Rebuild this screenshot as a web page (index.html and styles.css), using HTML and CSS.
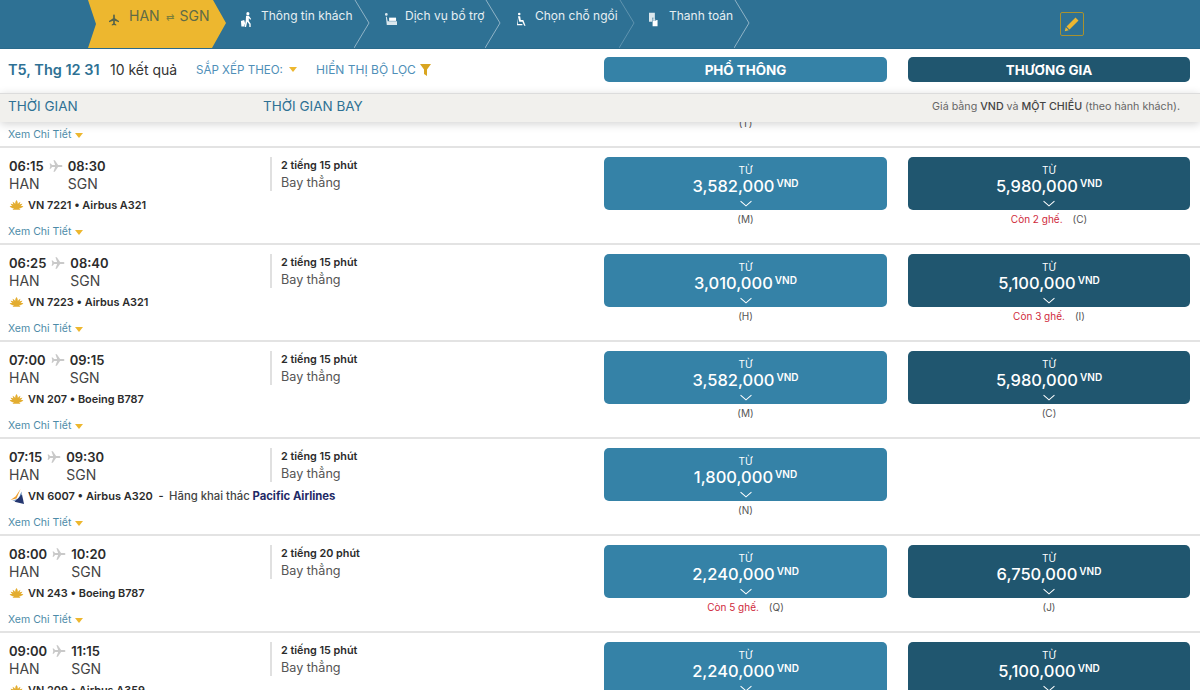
FILE: index.html
```html
<!DOCTYPE html>
<html lang="vi">
<head>
<meta charset="utf-8">
<title>Chọn chuyến bay</title>
<link rel="stylesheet" href="styles.css">
</head>
<body>
<svg class="defs" width="0" height="0">
  <defs>
    <symbol id="plane" viewBox="0 0 24 24"><path d="M23 12c0-1-1-1.700-2.500-1.700h-5L10 2H7.600l2.900 8.300H5.200L3 7.500H1l1.200 4.500L1 16.500h2l2.200-2.800h5.300L7.600 22H10l5.500-8.300h5C22 13.700 23 13 23 12z"/></symbol>
    <symbol id="lotus" viewBox="0 0 24 16"><path d="M12 0c1.600 2 2.300 4 2 6.500 1-1.700 2.400-3 4.200-3.700-.2 1.700-.6 3-1.300 4.400 1.500-.9 3-1.300 4.600-1.200-.7 1.500-1.600 2.700-2.800 3.600 1.400-.2 2.800 0 4.300.7-2.500 2.400-5 3-7.400 2.700 1.300.5 2.200 1.300 2.600 2.500H5.800c.4-1.200 1.300-2 2.600-2.500-2.400.3-4.900-.3-7.400-2.700 1.500-.7 2.900-.9 4.300-.7C4.100 8.700 3.200 7.500 2.500 6c1.600-.1 3.100.3 4.600 1.200C6.400 5.800 6 4.500 5.800 2.800 7.600 3.500 9 4.800 10 6.500 9.700 4 10.400 2 12 0z"/></symbol>
    <symbol id="chev" viewBox="0 0 18 8"><path d="M2 1l7 6 7-6" fill="none" stroke="#fff" stroke-width="1.300"/></symbol>
    <symbol id="tri" viewBox="0 0 8 5"><path d="M0 0h8L4 5z"/></symbol>
  </defs>
</svg>

<div class="page">
  <nav class="steps">
    <div class="step-current">
      <svg class="ic-route" viewBox="0 0 24 24"><use href="#plane" transform="rotate(-90 12 12)"/></svg>
      <span class="route">HAN <span class="swap">⇄</span> SGN</span>
    </div>
    <div class="step step-a">
      <svg class="step-ic" viewBox="0 0 14 16"><path d="M8.500 0a1.700 1.700 0 1 1 0 3.400 1.700 1.700 0 0 1 0-3.400zM6.500 4h3l2.500 3.500-1 .7L9.500 6.500v3.200l2 2.800v3.500H10v-3L7.800 10.500 6.500 16H5l1.200-7zM1 9.500l3.500-1 1 3.500-1 3.500H1.500z" fill="#fff"/></svg>
      <span class="step-text">Thông tin khách</span>
      <svg class="sep" viewBox="0 0 16 48"><path d="M1 0l14 23L0 48" fill="none" stroke="#8fb3c6"/></svg>
    </div>
    <div class="step step-b">
      <svg class="step-ic" viewBox="0 0 14 14"><path d="M1 1.500a1.500 1.500 0 1 1 3 0 1.500 1.500 0 0 1-3 0zM2 4l1 0 1 5h10v4H3z" fill="#dbe8ee"/><path d="M5.500 5h7.500v3.500H5.500z" fill="#fff"/></svg>
      <span class="step-text">Dịch vụ bổ trợ</span>
      <svg class="sep" viewBox="0 0 16 48"><path d="M1 0l14 23L0 48" fill="none" stroke="#8fb3c6"/></svg>
    </div>
    <div class="step step-c">
      <svg class="step-ic step-ic-sm" viewBox="0 0 10 15"><path d="M2.500 0a1.400 1.400 0 1 1 0 2.800 1.400 1.400 0 0 1 0-2.800zM1 4h2.500l.7 4H7l2.500 6.500H8L6 10H2.500zM.3 6l.7 6.500H6v1.500H0z" fill="#fff"/></svg>
      <span class="step-text">Chọn chỗ ngồi</span>
      <svg class="sep sep-faint" viewBox="0 0 16 48"><path d="M1 0l14 23L0 48" fill="none" stroke="#5e93ae"/></svg>
    </div>
    <div class="step step-d">
      <svg class="step-ic step-ic-sm" viewBox="0 0 10 15"><path d="M0 0h6.500v8H5V5.500H3.500V10H0z" fill="#dbe8ee"/><path d="M4 6h1v3h1V7.500h1V9h1V8h1.500v7H4z" fill="#fff"/></svg>
      <span class="step-text">Thanh toán</span>
      <svg class="sep" viewBox="0 0 16 48"><path d="M1 0l14 23L0 48" fill="none" stroke="#8fb3c6"/></svg>
    </div>
    <button class="edit" aria-label="Sửa">
      <svg viewBox="0 0 16 16" width="16" height="16"><path d="M11.500 1.500l3 3-9 9-3-3zM1.800 11.300l2.900 2.900-3.900 1z" fill="#edb72f"/></svg>
    </button>
  </nav>

  <div class="toolbar">
    <div class="date">T5, Thg 12 31</div>
    <div class="count">10 kết quả</div>
    <div class="tool tool-sort">SẮP XẾP THEO:<svg class="tri-sort"><use href="#tri"/></svg></div>
    <div class="tool tool-filter">HIỂN THỊ BỘ LỌC<svg class="funnel" viewBox="0 0 11 12"><path d="M0 0h11L7 5.500V12L4 10V5.500z"/></svg></div>
    <div class="cabin eco">PHỔ THÔNG</div>
    <div class="cabin biz">THƯƠNG GIA</div>
  </div>

  <div class="thead">
    <div class="th-time">THỜI GIAN</div>
    <div class="th-dur">THỜI GIAN BAY</div>
    <div class="th-note">Giá bằng <b>VND</b> và <b>MỘT CHIỀU</b> (theo hành khách).</div>
  </div>

  <div class="list">
    <div class="row row-partial">
      <div class="partial-left"><a class="more">Xem Chi Tiết <svg class="tri"><use href="#tri"/></svg></a></div>
      <div class="partial-note">(T)</div>
    </div>

    <div class="row">
      <div class="c-flight">
        <div class="times"><b>06:15</b><svg class="pl"><use href="#plane"/></svg><b>08:30</b><span>HAN</span><i></i><span>SGN</span></div>
        <div class="carrier"><svg class="lotus"><use href="#lotus"/></svg>VN 7221 • Airbus A321</div>
        <a class="more">Xem Chi Tiết <svg class="tri"><use href="#tri"/></svg></a>
      </div>
      <div class="c-dur"><b>2 tiếng 15 phút</b><span>Bay thẳng</span></div>
      <div class="c-fare"><div class="fare eco"><small>TỪ</small><div class="price">3,582,000<sup>VND</sup></div><svg class="chev"><use href="#chev"/></svg></div><div class="note">(M)</div></div>
      <div class="c-fare"><div class="fare biz"><small>TỪ</small><div class="price">5,980,000<sup>VND</sup></div><svg class="chev"><use href="#chev"/></svg></div><div class="note"><em>Còn 2 ghế.</em>(C)</div></div>
    </div>

    <div class="row">
      <div class="c-flight">
        <div class="times"><b>06:25</b><svg class="pl"><use href="#plane"/></svg><b>08:40</b><span>HAN</span><i></i><span>SGN</span></div>
        <div class="carrier"><svg class="lotus"><use href="#lotus"/></svg>VN 7223 • Airbus A321</div>
        <a class="more">Xem Chi Tiết <svg class="tri"><use href="#tri"/></svg></a>
      </div>
      <div class="c-dur"><b>2 tiếng 15 phút</b><span>Bay thẳng</span></div>
      <div class="c-fare"><div class="fare eco"><small>TỪ</small><div class="price">3,010,000<sup>VND</sup></div><svg class="chev"><use href="#chev"/></svg></div><div class="note">(H)</div></div>
      <div class="c-fare"><div class="fare biz"><small>TỪ</small><div class="price">5,100,000<sup>VND</sup></div><svg class="chev"><use href="#chev"/></svg></div><div class="note"><em>Còn 3 ghế.</em>(I)</div></div>
    </div>

    <div class="row">
      <div class="c-flight">
        <div class="times"><b>07:00</b><svg class="pl"><use href="#plane"/></svg><b>09:15</b><span>HAN</span><i></i><span>SGN</span></div>
        <div class="carrier"><svg class="lotus"><use href="#lotus"/></svg>VN 207 • Boeing B787</div>
        <a class="more">Xem Chi Tiết <svg class="tri"><use href="#tri"/></svg></a>
      </div>
      <div class="c-dur"><b>2 tiếng 15 phút</b><span>Bay thẳng</span></div>
      <div class="c-fare"><div class="fare eco"><small>TỪ</small><div class="price">3,582,000<sup>VND</sup></div><svg class="chev"><use href="#chev"/></svg></div><div class="note">(M)</div></div>
      <div class="c-fare"><div class="fare biz"><small>TỪ</small><div class="price">5,980,000<sup>VND</sup></div><svg class="chev"><use href="#chev"/></svg></div><div class="note">(C)</div></div>
    </div>

    <div class="row">
      <div class="c-flight">
        <div class="times"><b>07:15</b><svg class="pl"><use href="#plane"/></svg><b>09:30</b><span>HAN</span><i></i><span>SGN</span></div>
        <div class="carrier carrier-wide"><svg class="pacific" viewBox="0 0 14 15"><path d="M10 0L5 7.500 0 11l6-1.500z" fill="#f0a030"/><path d="M11 2.500L8 10 1.500 11.500 11 11.800z" fill="#3f6fa8"/><path d="M11.500 5.500L13.500 15 4 12.800z" fill="#24366f"/></svg>VN 6007 • Airbus A320&nbsp; - &nbsp;<span class="op">Hãng khai thác</span>&nbsp;<strong>Pacific Airlines</strong></div>
        <a class="more">Xem Chi Tiết <svg class="tri"><use href="#tri"/></svg></a>
      </div>
      <div class="c-dur"><b>2 tiếng 15 phút</b><span>Bay thẳng</span></div>
      <div class="c-fare"><div class="fare eco"><small>TỪ</small><div class="price">1,800,000<sup>VND</sup></div><svg class="chev"><use href="#chev"/></svg></div><div class="note">(N)</div></div>
      <div class="c-fare"></div>
    </div>

    <div class="row">
      <div class="c-flight">
        <div class="times"><b>08:00</b><svg class="pl"><use href="#plane"/></svg><b>10:20</b><span>HAN</span><i></i><span>SGN</span></div>
        <div class="carrier"><svg class="lotus"><use href="#lotus"/></svg>VN 243 • Boeing B787</div>
        <a class="more">Xem Chi Tiết <svg class="tri"><use href="#tri"/></svg></a>
      </div>
      <div class="c-dur"><b>2 tiếng 20 phút</b><span>Bay thẳng</span></div>
      <div class="c-fare"><div class="fare eco"><small>TỪ</small><div class="price">2,240,000<sup>VND</sup></div><svg class="chev"><use href="#chev"/></svg></div><div class="note"><em>Còn 5 ghế.</em>(Q)</div></div>
      <div class="c-fare"><div class="fare biz"><small>TỪ</small><div class="price">6,750,000<sup>VND</sup></div><svg class="chev"><use href="#chev"/></svg></div><div class="note">(J)</div></div>
    </div>

    <div class="row">
      <div class="c-flight">
        <div class="times"><b>09:00</b><svg class="pl"><use href="#plane"/></svg><b>11:15</b><span>HAN</span><i></i><span>SGN</span></div>
        <div class="carrier"><svg class="lotus"><use href="#lotus"/></svg>VN 209 • Airbus A359</div>
        <a class="more">Xem Chi Tiết <svg class="tri"><use href="#tri"/></svg></a>
      </div>
      <div class="c-dur"><b>2 tiếng 15 phút</b><span>Bay thẳng</span></div>
      <div class="c-fare"><div class="fare eco"><small>TỪ</small><div class="price">2,240,000<sup>VND</sup></div><svg class="chev"><use href="#chev"/></svg></div><div class="note">(R)</div></div>
      <div class="c-fare"><div class="fare biz"><small>TỪ</small><div class="price">5,100,000<sup>VND</sup></div><svg class="chev"><use href="#chev"/></svg></div><div class="note">(I)</div></div>
    </div>
  </div>
</div>
</body>
</html>
```

FILE: styles.css
```css
* { box-sizing: border-box; }
html, body { margin: 0; padding: 0; }
body {
  font-family: Inter, "Noto Sans", "Liberation Sans", sans-serif;
  color: #333;
  background: #fff;
}
.defs { display: block; height: 0; }
.page { width: 1200px; height: 690px; overflow: hidden; display: flex; flex-direction: column; }

/* Step bar */
.steps {
  flex: none;
  height: 49px;
  background: #2e7194;
  border-bottom: 1px solid #2a6a8b;
  padding-left: 88px;
  display: flex;
  align-items: stretch;
}
.step-current {
  flex: none;
  width: 138px;
  background: #edb72f;
  clip-path: polygon(0 0, 125px 0, 138px 23px, 124px 100%, 0 100%, 8px 24px);
  display: flex;
  align-items: flex-start;
  padding: 9px 0 0 20px;
  color: #5f6b47;
}
.ic-route { width: 12px; height: 12px; fill: #56634a; margin: 5px 9px 0 0; flex: none; }
.route { font-size: 14px; line-height: 14px; white-space: nowrap; }
.swap { font-size: 10px; margin: 0 2px; color: #7d7f3a; }
.step { display: flex; align-items: flex-start; flex: none; color: #e6eff3; }
.step-a { width: 144px; padding-left: 14px; }
.step-b { width: 131px; padding-left: 14px; }
.step-c { width: 134px; padding-left: 16px; }
.step-d { width: 115px; padding-left: 14px; }
.step-ic { width: 13px; height: 15px; margin-top: 12px; flex: none; }
.step-ic-sm { width: 9px; }
.step-a .step-text { margin-left: 8px; }
.step-b .step-text { margin-left: 8px; }
.step-c .step-text { margin-left: 9px; }
.step-d .step-text { margin-left: 11px; }
.step-text { font-size: 12px; line-height: 14px; padding-top: 9px; white-space: nowrap; flex: 1; }
.sep { width: 16px; height: 48px; flex: none; }
.edit {
  align-self: flex-start;
  margin: 12px 0 0 310px;
  width: 24px;
  height: 24px;
  padding: 0;
  background: transparent;
  border: 1px solid #a8922f;
  border-radius: 2px;
  display: flex;
  align-items: center;
  justify-content: center;
}

/* Toolbar */
.toolbar {
  flex: none;
  height: 44px;
  display: flex;
  align-items: center;
  padding: 0 0 3px 8px;
  background: #fff;
}
.date { width: 102px; font-size: 14.500px; font-weight: 600; color: #2e7194; white-space: nowrap; }
.count { width: 86px; font-size: 14px; color: #333; white-space: nowrap; }
.tool { color: #4f8fb8; white-space: nowrap; display: flex; align-items: center; }
.tool-sort { width: 120px; font-size: 11.600px; }
.tool-filter { width: 288px; font-size: 12px; }
.tri-sort { width: 8px; height: 5px; fill: #edb72f; margin-left: 6px; }
.funnel { width: 11px; height: 12px; fill: #d9a520; margin-left: 4px; }
.cabin {
  height: 25px;
  border-radius: 5px;
  color: #fff;
  font-size: 13.400px;
  font-weight: 700;
  display: flex;
  align-items: center;
  justify-content: center;
  flex: none;
}
.cabin.eco { width: 283px; background: #3582a7; margin-right: 21px; }
.cabin.biz { width: 282px; background: #20566f; }

/* Table head */
.thead {
  flex: none;
  position: relative;
  z-index: 2;
  height: 29px;
  background: #f1f0ed;
  border-top: 1px solid #dcdcdc;
  box-shadow: 0 2px 10px rgba(0, 0, 0, .18);
  display: flex;
  align-items: center;
  padding: 0 0 4px 8px;
}
.th-time { width: 255px; font-size: 13.500px; color: #2e7194; }
.th-dur { width: 300px; font-size: 13.500px; color: #2e7194; white-space: nowrap; }
.th-note { flex: 1; text-align: right; padding-right: 20px; font-size: 10.700px; color: #666; white-space: nowrap; }
.th-note b { font-weight: 500; color: #444; }

/* Rows */
.list { flex: 1; min-height: 0; overflow: hidden; }
.row {
  height: 97px;
  border-bottom: 2px solid #e3e3e3;
  display: flex;
  background: #fff;
}
.row-partial { height: 26px; }
.partial-left { width: 604px; flex: none; padding-left: 8px; }
.row-partial .more { margin-top: 6px; }
.partial-note {
  width: 283px;
  margin-top: -5px;
  text-align: center;
  font-size: 10px;
  line-height: 12px;
  color: #555;
}
.c-flight { width: 270px; flex: none; padding: 7px 0 0 9px; }
.times {
  display: inline-grid;
  grid-template-columns: auto auto auto;
  column-gap: 5px;
  align-items: center;
}
.times b { font-size: 13px; font-weight: 600; color: #2b2b2b; line-height: 18px; }
.times span { font-size: 14px; color: #444; line-height: 18px; }
.pl { width: 14px; height: 14px; fill: #c9c9c9; }
.carrier {
  display: flex;
  align-items: center;
  height: 18px;
  margin: 3px 0 0 -1px;
  font-size: 10.900px;
  font-weight: 600;
  color: #2b2b2b;
  white-space: nowrap;
}
.carrier-wide { font-size: 11px; }
.lotus { width: 15px; height: 10px; fill: #e3ad30; margin: 0 4px 0 1px; flex: none; }
.pacific { width: 15px; height: 15px; margin: 0 3px 0 2px; flex: none; }
.op { font-weight: 500; color: #444; font-size: 11.300px; }
.carrier strong { font-weight: 700; color: #1f2a66; font-size: 11.300px; }
.more {
  display: flex;
  align-items: center;
  margin: 11px 0 0 -1px;
  font-size: 10.500px;
  line-height: 14px;
  color: #4d8ba8;
  white-space: nowrap;
}
.row-partial .more { margin-left: 0; }
.tri { width: 8px; height: 5px; fill: #edb72f; margin-left: 4px; }
.c-dur {
  width: 334px;
  flex: none;
  margin-top: 9px;
  height: 34px;
  display: flex;
  flex-direction: column;
  border-left: 2px solid #e0e0e0;
  padding-left: 9px;
}
.c-dur b { font-size: 10.800px; line-height: 18px; font-weight: 600; color: #2b2b2b; white-space: nowrap; }
.c-dur span { font-size: 12.600px; line-height: 16px; color: #555; white-space: nowrap; }
.c-fare { flex: none; width: 283px; padding-top: 9px; }
.c-fare + .c-fare { margin-left: 21px; width: 282px; }
.fare {
  height: 53px;
  border-radius: 5px;
  color: #fff;
  display: flex;
  flex-direction: column;
  align-items: center;
  padding-top: 8px;
}
.fare.eco { background: #3582a7; }
.fare.biz { background: #20566f; }
.fare small { font-size: 10px; line-height: 11px; }
.price { font-size: 16.500px; font-weight: 500; line-height: 20px; white-space: nowrap; }
.price sup { font-size: 10px; font-weight: 600; line-height: 0; margin-left: 2px; vertical-align: 5px; }
.chev { width: 14px; height: 7px; margin-top: 4px; flex: none; }
.note {
  text-align: center;
  font-size: 10px;
  line-height: 12px;
  margin-top: 3px;
  color: #555;
}
.note em { font-style: normal; color: #cf2a3c; margin-right: 10px; }
```
